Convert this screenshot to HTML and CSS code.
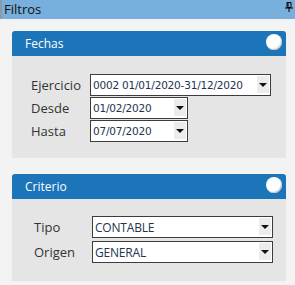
FILE: index.html
```html
<!DOCTYPE html>
<html lang="es">
<head>
  <meta charset="UTF-8">
  <title>Filtros</title>
  <link rel="stylesheet" href="styles.css">
</head>
<body>
  <div class="titlebar">
    <span class="title">Filtros</span>
    <svg class="pin" width="8" height="10" viewBox="0 0 8 10">
      <path d="M2 0.5h4v5h-4z M3 1v4 M0 6h8 M4 6v4" fill="none" stroke="#000" stroke-width="1"/>
    </svg>
  </div>

  <div class="content">
    <!-- Fechas -->
    <div class="panel">
      <div class="panel-head">
        <span>Fechas</span>
        <span class="toggle"></span>
      </div>
      <div class="panel-body fechas">
        <div class="row">
          <label>Ejercicio</label>
          <div class="select wide"><span>0002 01/01/2020-31/12/2020</span><i class="arrow"></i></div>
        </div>
        <div class="row">
          <label>Desde</label>
          <div class="select short"><span>01/02/2020</span><i class="arrow"></i></div>
        </div>
        <div class="row">
          <label>Hasta</label>
          <div class="select short"><span>07/07/2020</span><i class="arrow"></i></div>
        </div>
      </div>
    </div>

    <!-- Criterio -->
    <div class="panel">
      <div class="panel-head">
        <span>Criterio</span>
        <span class="toggle"></span>
      </div>
      <div class="panel-body criterio">
        <div class="row">
          <label>Tipo</label>
          <div class="select wide"><span>CONTABLE</span><i class="arrow"></i></div>
        </div>
        <div class="row">
          <label>Origen</label>
          <div class="select wide"><span>GENERAL</span><i class="arrow"></i></div>
        </div>
      </div>
    </div>
  </div>
</body>
</html>
```

FILE: styles.css
```css
/* basic reset */
html, body {
  margin: 0;
  padding: 0;
}

body {
  background-color: #f3f3f3;
  font-family: "Open Sans", "Noto Sans", sans-serif;
  color: #333;
  width: 295px;
  height: 285px;
  overflow: hidden;
}

/* top docking bar */
.titlebar {
  height: 19px;
  background-color: #78afdc;
  border-left: 2px solid #8a9aa8;
  display: flex;
  align-items: center;
  justify-content: space-between;
  padding: 0 2px 0 2px;
  box-sizing: border-box;
}

.title {
  font-size: 13px;
  color: #111;
  line-height: 19px;
}

.pin {
  margin-top: -5px;
}

.content {
  padding: 12px 9px 0 12px;
}

.panel {
  margin-bottom: 16px;
}

.panel-head {
  height: 25px;
  background-color: #1c75b8;
  border-radius: 3px 3px 0 0;
  color: #fff;
  font-size: 12px;
  display: flex;
  align-items: center;
  justify-content: space-between;
  padding: 0 4px 0 13px;
}

.toggle {
  width: 16px;
  height: 16px;
  border-radius: 50%;
  background: #fff;
  box-shadow: inset -1px -1px 1px #b8c4d0;
  margin-top: -3px;
}

.panel-body {
  background-color: #e5e5e5;
}

.panel-body.fechas {
  padding: 18px 0 15px 19px;
}

.panel-body.criterio {
  padding: 17px 0 15px 22px;
}

.row {
  display: flex;
  align-items: center;
  margin-bottom: 1px;
}

.row label {
  font-size: 13px;
  color: #333;
  width: 59px;
}

.criterio .row label {
  width: 58px;
}

.criterio .row {
  margin-bottom: 3px;
}

/* fake dropdowns */
.select {
  height: 22px;
  box-sizing: border-box;
  background: #fff;
  border: 1px solid #3c3c3c;
  display: flex;
  align-items: center;
  justify-content: space-between;
  font-family: "DejaVu Sans", sans-serif;
  font-size: 10.5px;
  color: #23344f;
  padding-left: 2px;
}

.select span {
  letter-spacing: -0.2px;
}

.criterio .select {
  font-family: "Open Sans", sans-serif;
  font-size: 12px;
}

.select.wide {
  width: 181px;
}

.select.short {
  width: 98px;
}

.arrow {
  width: 12px;
  align-self: stretch;
  margin: 1px 1px 2px 0;
  background: #ececec;
  position: relative;
}

.arrow::after {
  content: "";
  position: absolute;
  left: 2px;
  top: 7px;
  border-left: 4px solid transparent;
  border-right: 4px solid transparent;
  border-top: 4px solid #111;
}
```
